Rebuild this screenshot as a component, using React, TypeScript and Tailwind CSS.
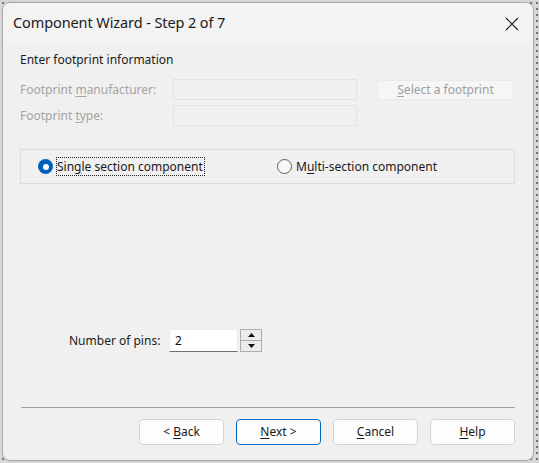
import React from "react";

const U = ({ children }: { children: React.ReactNode }) => (
  <span className="underline underline-offset-[2px] decoration-[1px]">{children}</span>
);

function Btn({ children, primary }: { children: React.ReactNode; primary?: boolean }) {
  return (
    <div
      className={
        "w-[85px] h-[26px] rounded-[4px] flex items-center justify-center text-[12px] text-[#1a1a1a] bg-[#fdfdfd] border " +
        (primary ? "border-[#0067c0]" : "border-[#d3d3d3]")
      }
    >
      {children}
    </div>
  );
}

export default function App() {
  return (
    <div
      className="w-[539px] h-[463px] bg-[#d6d6d6] pt-[2px] pl-[2px] overflow-hidden bg-[radial-gradient(#3a3a3a_0.6px,transparent_0.9px)] bg-[length:6px_6px]"
      style={{ fontFamily: '"Noto Sans", "Open Sans", sans-serif' }}
    >
      <div className="w-[532px] h-[459px] rounded-[8px] border border-[#a8a8a8] bg-[#f0f0f0] flex flex-col overflow-hidden">
        {/* Title bar */}
        <div className="h-[40px] shrink-0 bg-[#f3f3f3] flex items-center justify-between pl-[10px] pr-[14px]">
          <span className="text-[14.5px] text-[#1b1b1b] tracking-[-0.1px]">Component Wizard - Step 2 of 7</span>
          <svg width="14" height="14" viewBox="0 0 14 14" className="mt-[2px]">
            <path d="M1 1 L13 13 M13 1 L1 13" stroke="#222" strokeWidth="1.2" />
          </svg>
        </div>

        {/* Body */}
        <div className="flex-1 flex flex-col pl-[17px] pr-[18px]">
          <div className="mt-[8px] h-[17px] flex items-center text-[12px] text-[#1a1a1a]">
            Enter footprint information
          </div>

          <div className="mt-[11px] flex items-center h-[21px]">
            <span className="w-[153px] text-[12px] text-[#a3a3a3]">
              Footprint <U>m</U>anufacturer:
            </span>
            <div className="w-[184px] h-[21px] border border-[#e2e2e2]" />
            <div className="ml-[20px] w-[137px] h-[20px] bg-[#f6f6f6] border border-[#ebebeb] rounded-[3px] flex items-center justify-center text-[12px] text-[#9d9d9d]">
              <U>S</U>elect a footprint
            </div>
          </div>

          <div className="mt-[5px] flex items-center h-[21px]">
            <span className="w-[153px] text-[12px] text-[#a3a3a3]">
              Footprint <U>t</U>ype:
            </span>
            <div className="w-[184px] h-[21px] border border-[#e2e2e2]" />
          </div>

          {/* Group box */}
          <div className="mt-[23px] h-[35px] border border-[#dcdcdc] flex items-center text-[12px] text-[#1a1a1a]">
            <div className="ml-[17px] w-[15px] h-[15px] rounded-full bg-[#005fb8] flex items-center justify-center">
              <div className="w-[6px] h-[6px] rounded-full bg-white" />
            </div>
            <div className="ml-[4px] w-[147px] h-[17px] flex items-center outline-1 outline-dotted outline-[#222] leading-none">
              Sin<U>g</U>le section component
            </div>
            <div className="ml-[73px] w-[15px] h-[15px] rounded-full border border-[#5e5e5e] bg-[#f7f7f7]" />
            <div className="ml-[4px]">
              M<U>u</U>lti-section component
            </div>
          </div>

          {/* Number of pins */}
          <div className="mt-[145px] flex items-center h-[23px]">
            <span className="ml-[49px] w-[100px] text-[12px] text-[#1a1a1a]">Number of pins:</span>
            <div className="w-[69px] h-[23px] bg-white border border-[#ececec] border-b-[#6e6e6e] flex items-center pl-[5px] text-[12px] text-[#111]">
              2
            </div>
            <div className="ml-[2px] w-[22px] h-[23px] border border-[#adadad] bg-[#ececec] flex flex-col">
              <div className="flex-1 flex items-center justify-center border-b border-[#adadad]">
                <svg width="7" height="4" viewBox="0 0 7 4">
                  <path d="M0 4 L3.5 0 L7 4 Z" fill="#111" />
                </svg>
              </div>
              <div className="flex-1 flex items-center justify-center">
                <svg width="7" height="4" viewBox="0 0 7 4">
                  <path d="M0 0 L3.5 4 L7 0 Z" fill="#111" />
                </svg>
              </div>
            </div>
          </div>

          {/* Separator */}
          <div className="mt-[55px] h-px bg-[#a0a0a0] ml-[1px]" />

          {/* Buttons */}
          <div className="mt-[11px] flex justify-end gap-[12px]">
            <Btn>
              {"<\u00a0"}
              <U>B</U>ack
            </Btn>
            <Btn primary>
              <U>N</U>ext{"\u00a0>"}
            </Btn>
            <Btn>
              <U>C</U>ancel
            </Btn>
            <Btn>
              <U>H</U>elp
            </Btn>
          </div>
        </div>
      </div>
    </div>
  );
}
